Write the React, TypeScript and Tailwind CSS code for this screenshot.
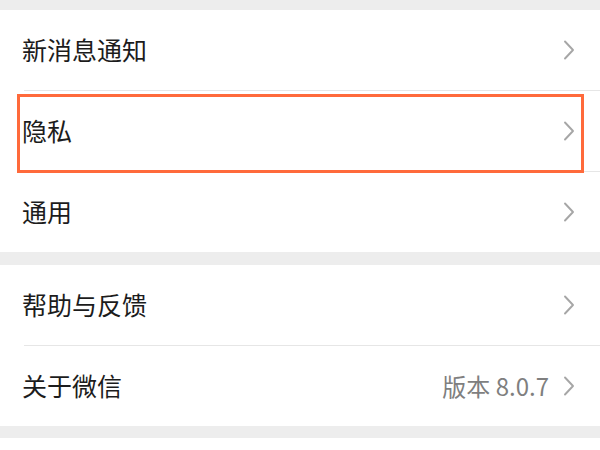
const font = { fontFamily: '"Noto Sans CJK SC", "Noto Sans", sans-serif' }

function Chevron() {
  return (
    <svg width="12" height="20" viewBox="0 0 12 20" fill="none" className="shrink-0">
      <path d="M2 1.5 L10 10 L2 18.5" stroke="#a6a6a6" strokeWidth="1.9" strokeLinecap="round" strokeLinejoin="round" />
    </svg>
  )
}

function Row({ label, value, highlight }: { label: string; value?: string; highlight?: boolean }) {
  return (
    <div className="relative flex items-center h-[80px] pl-[22px] pr-[25px]">
      <span className="flex-1 text-[25px] text-[#1c1c1c]">{label}</span>
      {value && <span className="text-[24px] text-[#7f7f7f] mr-[14px]">{value}</span>}
      <Chevron />
      {highlight && (
        <div className="absolute top-[3px] -bottom-[2px] left-[17px] right-[16px] border-[3.5px] border-[#ff6a3b] pointer-events-none" />
      )}
    </div>
  )
}

function Sep() {
  return <div className="ml-[24px] h-px bg-[#e6e6e6]" />
}

export default function App() {
  return (
    <div className="w-[600px] h-[450px] overflow-hidden bg-[#ededed] flex flex-col" style={font}>
      <div className="h-[10px] shrink-0" />

      <div className="bg-white shrink-0">
        <Row label="新消息通知" />
        <Sep />
        <Row label="隐私" highlight />
        <Sep />
        <Row label="通用" />
      </div>

      <div className="h-[13px] shrink-0" />

      <div className="bg-white shrink-0">
        <Row label="帮助与反馈" />
        <Sep />
        <Row label="关于微信" value="版本 8.0.7" />
      </div>

      <div className="h-[12px] shrink-0" />
      <div className="bg-white flex-1" />
    </div>
  )
}
